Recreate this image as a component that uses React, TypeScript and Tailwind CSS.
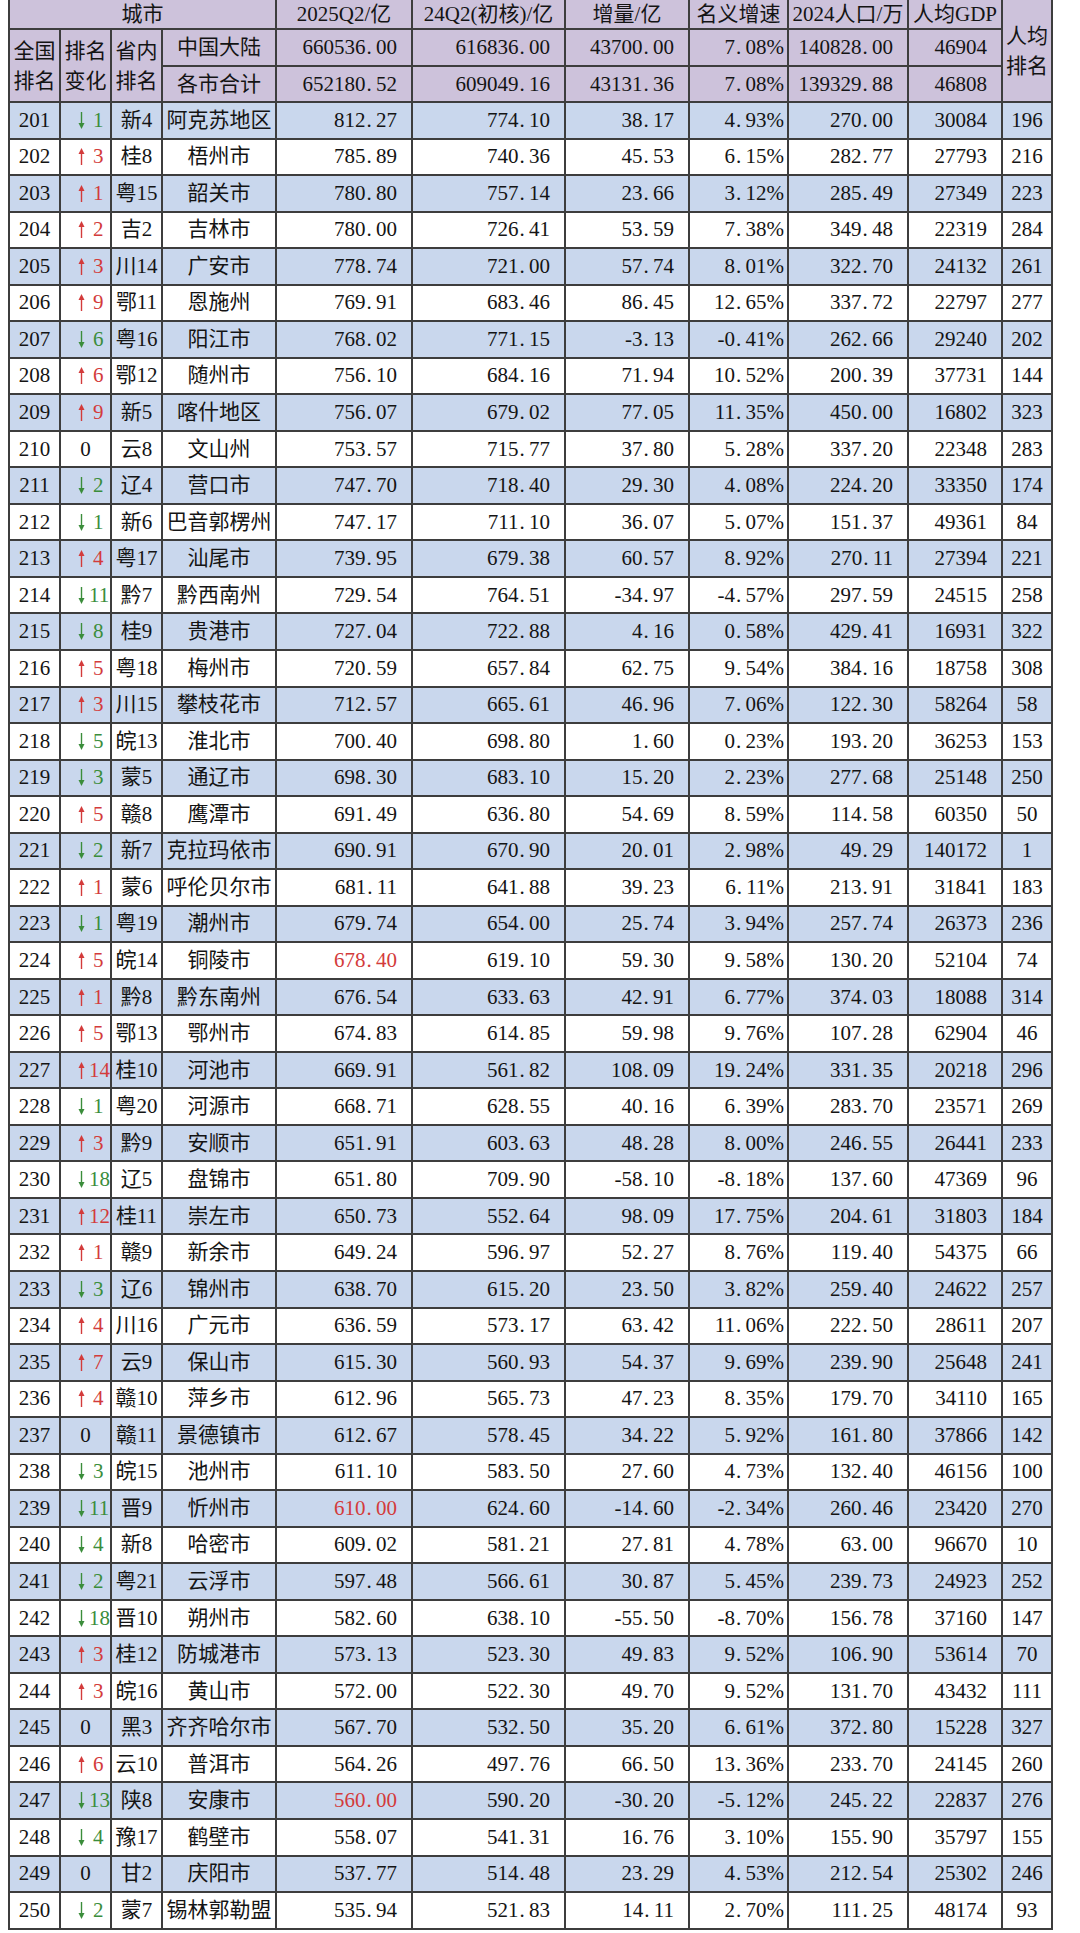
import React from "react";

const raw = `201|-1|新4|阿克苏地区|812.27|774.10|38.17|4.93%|270.00|30084|196
202|3|桂8|梧州市|785.89|740.36|45.53|6.15%|282.77|27793|216
203|1|粤15|韶关市|780.80|757.14|23.66|3.12%|285.49|27349|223
204|2|吉2|吉林市|780.00|726.41|53.59|7.38%|349.48|22319|284
205|3|川14|广安市|778.74|721.00|57.74|8.01%|322.70|24132|261
206|9|鄂11|恩施州|769.91|683.46|86.45|12.65%|337.72|22797|277
207|-6|粤16|阳江市|768.02|771.15|-3.13|-0.41%|262.66|29240|202
208|6|鄂12|随州市|756.10|684.16|71.94|10.52%|200.39|37731|144
209|9|新5|喀什地区|756.07|679.02|77.05|11.35%|450.00|16802|323
210|0|云8|文山州|753.57|715.77|37.80|5.28%|337.20|22348|283
211|-2|辽4|营口市|747.70|718.40|29.30|4.08%|224.20|33350|174
212|-1|新6|巴音郭楞州|747.17|711.10|36.07|5.07%|151.37|49361|84
213|4|粤17|汕尾市|739.95|679.38|60.57|8.92%|270.11|27394|221
214|-11|黔7|黔西南州|729.54|764.51|-34.97|-4.57%|297.59|24515|258
215|-8|桂9|贵港市|727.04|722.88|4.16|0.58%|429.41|16931|322
216|5|粤18|梅州市|720.59|657.84|62.75|9.54%|384.16|18758|308
217|3|川15|攀枝花市|712.57|665.61|46.96|7.06%|122.30|58264|58
218|-5|皖13|淮北市|700.40|698.80|1.60|0.23%|193.20|36253|153
219|-3|蒙5|通辽市|698.30|683.10|15.20|2.23%|277.68|25148|250
220|5|赣8|鹰潭市|691.49|636.80|54.69|8.59%|114.58|60350|50
221|-2|新7|克拉玛依市|690.91|670.90|20.01|2.98%|49.29|140172|1
222|1|蒙6|呼伦贝尔市|681.11|641.88|39.23|6.11%|213.91|31841|183
223|-1|粤19|潮州市|679.74|654.00|25.74|3.94%|257.74|26373|236
224|5|皖14|铜陵市|678.40*|619.10|59.30|9.58%|130.20|52104|74
225|1|黔8|黔东南州|676.54|633.63|42.91|6.77%|374.03|18088|314
226|5|鄂13|鄂州市|674.83|614.85|59.98|9.76%|107.28|62904|46
227|14|桂10|河池市|669.91|561.82|108.09|19.24%|331.35|20218|296
228|-1|粤20|河源市|668.71|628.55|40.16|6.39%|283.70|23571|269
229|3|黔9|安顺市|651.91|603.63|48.28|8.00%|246.55|26441|233
230|-18|辽5|盘锦市|651.80|709.90|-58.10|-8.18%|137.60|47369|96
231|12|桂11|崇左市|650.73|552.64|98.09|17.75%|204.61|31803|184
232|1|赣9|新余市|649.24|596.97|52.27|8.76%|119.40|54375|66
233|-3|辽6|锦州市|638.70|615.20|23.50|3.82%|259.40|24622|257
234|4|川16|广元市|636.59|573.17|63.42|11.06%|222.50|28611|207
235|7|云9|保山市|615.30|560.93|54.37|9.69%|239.90|25648|241
236|4|赣10|萍乡市|612.96|565.73|47.23|8.35%|179.70|34110|165
237|0|赣11|景德镇市|612.67|578.45|34.22|5.92%|161.80|37866|142
238|-3|皖15|池州市|611.10|583.50|27.60|4.73%|132.40|46156|100
239|-11|晋9|忻州市|610.00*|624.60|-14.60|-2.34%|260.46|23420|270
240|-4|新8|哈密市|609.02|581.21|27.81|4.78%|63.00|96670|10
241|-2|粤21|云浮市|597.48|566.61|30.87|5.45%|239.73|24923|252
242|-18|晋10|朔州市|582.60|638.10|-55.50|-8.70%|156.78|37160|147
243|3|桂12|防城港市|573.13|523.30|49.83|9.52%|106.90|53614|70
244|3|皖16|黄山市|572.00|522.30|49.70|9.52%|131.70|43432|111
245|0|黑3|齐齐哈尔市|567.70|532.50|35.20|6.61%|372.80|15228|327
246|6|云10|普洱市|564.26|497.76|66.50|13.36%|233.70|24145|260
247|-13|陕8|安康市|560.00*|590.20|-30.20|-5.12%|245.22|22837|276
248|-4|豫17|鹤壁市|558.07|541.31|16.76|3.10%|155.90|35797|155
249|0|甘2|庆阳市|537.77|514.48|23.29|4.53%|212.54|25302|246
250|-2|蒙7|锡林郭勒盟|535.94|521.83|14.11|2.70%|111.25|48174|93`;

const rows = raw.split("\n").map((l) => l.split("|"));

const RED = "#d33b3b";
const GREEN = "#3b8d3b";

// SimSun-like wide dot
function num(s: string) {
  const i = s.indexOf(".");
  if (i < 0) return s;
  return (
    <>
      {s.slice(0, i)}
      <span className="inline-block w-[0.5em] pl-[1px]">.</span>
      {s.slice(i + 1)}
    </>
  );
}

function Arrow({ up, color }: { up: boolean; color: string }) {
  return (
    <svg width="7" height="17" viewBox="0 0 7 17" className="shrink-0">
      {up ? (
        <>
          <line x1="3.5" y1="5" x2="3.5" y2="17" stroke={color} strokeWidth="1.4" />
          <polygon points="0.5,6 6.5,6 3.5,0" fill={color} />
        </>
      ) : (
        <>
          <line x1="3.5" y1="0" x2="3.5" y2="12" stroke={color} strokeWidth="1.4" />
          <polygon points="0.5,11 6.5,11 3.5,17" fill={color} />
        </>
      )}
    </svg>
  );
}

const cell =
  "flex items-center border-r-2 border-b-2 border-[#3d3d3d] overflow-hidden whitespace-nowrap";
const base = `${cell} leading-none`;
const hd = "bg-[#cdc2db]";
const stack = `${cell} ${hd} flex-col justify-center leading-[30px]`;

const App = () => {
  return (
    <div className="w-[1080px] min-h-[1933px] bg-white overflow-hidden font-['Liberation_Serif','Noto_Sans_CJK_SC',serif] text-[21px] text-[#141414]">
      <div className="ml-[8px] w-[1045px] border-l-2 border-[#3d3d3d] grid grid-cols-[51px_51px_51px_114px_136px_153px_124px_99px_120px_94px_50px] grid-rows-[30px_37px_36px_repeat(50,36.54px)]">
        {/* header row 1 */}
        <div className={`${base} ${hd} col-span-4 justify-center`}>城市</div>
        <div className={`${base} ${hd} justify-center`}>2025Q2/亿</div>
        <div className={`${base} ${hd} justify-center`}>24Q2(初核)/亿</div>
        <div className={`${base} ${hd} justify-center`}>增量/亿</div>
        <div className={`${base} ${hd} justify-center`}>名义增速</div>
        <div className={`${base} ${hd} justify-center`}>2024人口/万</div>
        <div className={`${base} ${hd} justify-center`}>人均GDP</div>
        <div className={`${stack} row-span-3`}>
          <span>人均</span>
          <span>排名</span>
        </div>

        {/* header rows 2-3 */}
        <div className={`${stack} row-span-2`}>
          <span>全国</span>
          <span>排名</span>
        </div>
        <div className={`${stack} row-span-2`}>
          <span>排名</span>
          <span>变化</span>
        </div>
        <div className={`${stack} row-span-2`}>
          <span>省内</span>
          <span>排名</span>
        </div>
        <div className={`${base} ${hd} justify-center`}>中国大陆</div>
        <div className={`${base} ${hd} justify-end pr-[14px]`}>{num("660536.00")}</div>
        <div className={`${base} ${hd} justify-end pr-[14px]`}>{num("616836.00")}</div>
        <div className={`${base} ${hd} justify-end pr-[14px]`}>{num("43700.00")}</div>
        <div className={`${base} ${hd} justify-end pr-[3px]`}>{num("7.08%")}</div>
        <div className={`${base} ${hd} justify-end pr-[14px]`}>{num("140828.00")}</div>
        <div className={`${base} ${hd} justify-end pr-[14px]`}>46904</div>

        <div className={`${base} ${hd} justify-center`}>各市合计</div>
        <div className={`${base} ${hd} justify-end pr-[14px]`}>{num("652180.52")}</div>
        <div className={`${base} ${hd} justify-end pr-[14px]`}>{num("609049.16")}</div>
        <div className={`${base} ${hd} justify-end pr-[14px]`}>{num("43131.36")}</div>
        <div className={`${base} ${hd} justify-end pr-[3px]`}>{num("7.08%")}</div>
        <div className={`${base} ${hd} justify-end pr-[14px]`}>{num("139329.88")}</div>
        <div className={`${base} ${hd} justify-end pr-[14px]`}>46808</div>

        {/* data rows */}
        {rows.map((r, idx) => {
          const bg = idx % 2 === 0 ? "bg-[#c9d7ed]" : "bg-white";
          const ch = parseInt(r[1], 10);
          const red = r[4].endsWith("*");
          const q2 = r[4].replace("*", "");
          const color = ch > 0 ? RED : GREEN;
          return (
            <React.Fragment key={r[0]}>
              <div className={`${base} ${bg} justify-center`}>{r[0]}</div>
              {ch === 0 ? (
                <div className={`${base} ${bg} justify-center`}>0</div>
              ) : (
                <div className={`${base} ${bg} pl-[17px]`} style={{ color }}>
                  <Arrow up={ch > 0} color={color} />
                  <span className={Math.abs(ch) >= 10 ? "ml-[4px]" : "ml-[8px]"}>
                    {Math.abs(ch)}
                  </span>
                </div>
              )}
              <div className={`${base} ${bg} justify-center`}>{r[2]}</div>
              <div className={`${base} ${bg} justify-center`}>{r[3]}</div>
              <div
                className={`${base} ${bg} justify-end pr-[14px] ${red ? "text-[#d33b3b]" : ""}`}
              >
                {num(q2)}
              </div>
              <div className={`${base} ${bg} justify-end pr-[14px]`}>{num(r[5])}</div>
              <div className={`${base} ${bg} justify-end pr-[14px]`}>{num(r[6])}</div>
              <div className={`${base} ${bg} justify-end pr-[3px]`}>{num(r[7])}</div>
              <div className={`${base} ${bg} justify-end pr-[14px]`}>{num(r[8])}</div>
              <div className={`${base} ${bg} justify-end pr-[14px]`}>{r[9]}</div>
              <div className={`${base} ${bg} justify-center`}>{r[10]}</div>
            </React.Fragment>
          );
        })}
      </div>
    </div>
  );
};

export default App;
